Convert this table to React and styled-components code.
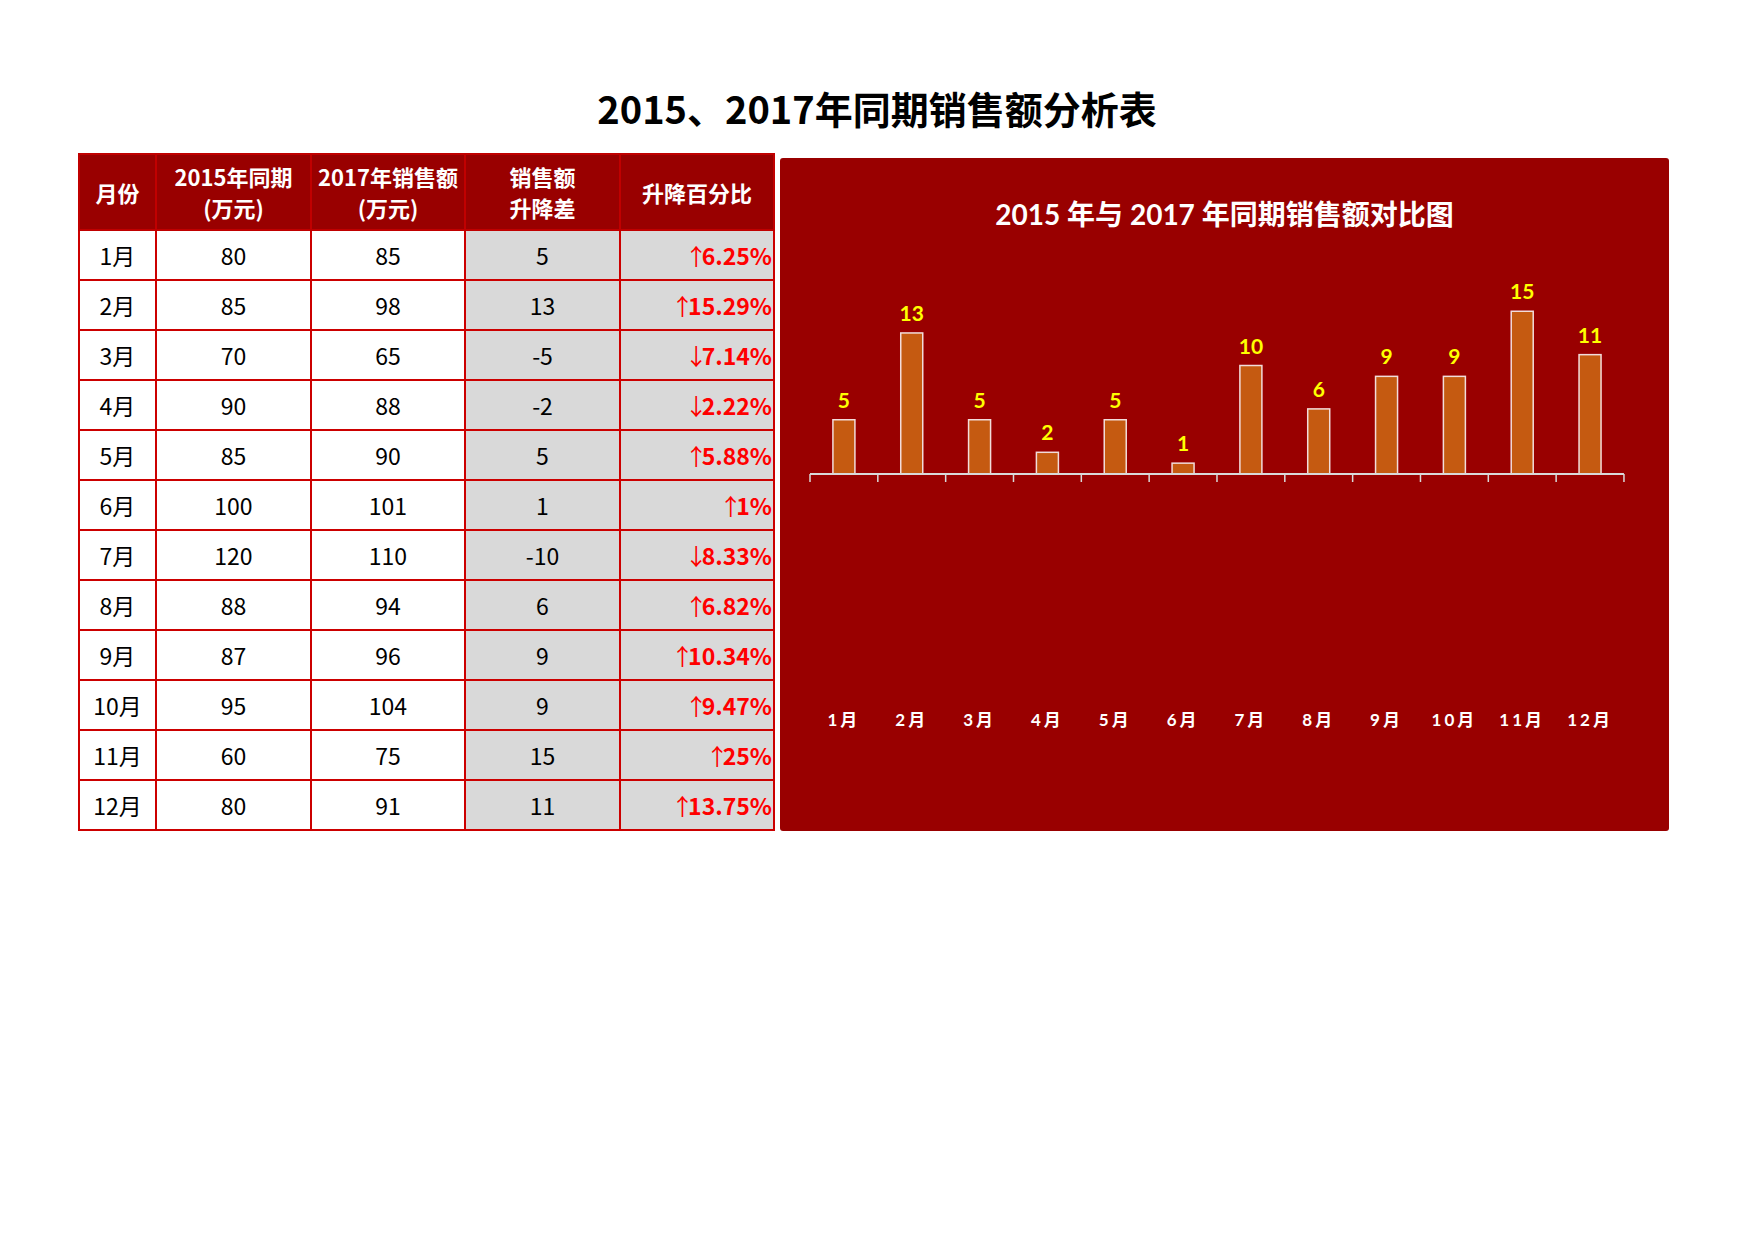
import React from 'react';
import styled, {createGlobalStyle} from 'styled-components';

const GlobalStyle = createGlobalStyle`
  body {
    margin: 0;
    background: #ffffff;
    font-family: "Noto Sans CJK SC", "Noto Sans", sans-serif;
  }
`;

const rows = [
  [80, 85], [85, 98], [70, 65], [90, 88], [85, 90], [100, 101],
  [120, 110], [88, 94], [87, 96], [95, 104], [60, 75], [80, 91],
].map(([a, b], i) => {
  const diff = b - a;
  const pct = parseFloat((Math.abs(diff) / a * 100).toFixed(2));
  return {month: `${i + 1}月`, a, b, diff, pct, up: diff >= 0};
});

const Page = styled.div`
  width: 1754px;
  min-height: 1240px;
`;

const Title = styled.h1`
  margin: 0;
  padding-top: 83px;
  height: 50px;
  line-height: 50px;
  text-align: center;
  font-size: 38px;
  font-weight: 700;
  color: #000;
`;

const Body = styled.div`
  display: flex;
  align-items: flex-end;
  gap: 5px;
  padding: 20px 0 0 78px;
`;

const Table = styled.table`
  border-collapse: collapse;
  table-layout: fixed;
  width: 694px;
  border: 2px solid #c00000;
`;

const HeadCell = styled.th`
  height: 74px;
  padding: 0;
  background: #990000;
  color: #fff;
  font-size: 22px;
  font-weight: 700;
  line-height: 31px;
  border: 2px solid #c00000;
  text-align: center;
  white-space: nowrap;
`;

const Cell = styled.td`
  height: 48px;
  padding: 0 ${p => (p.$right ? '1px' : '0')} 0 0;
  border: 2px solid #cc0000;
  background: ${p => (p.$gray ? '#d9d9d9' : '#fff')};
  color: ${p => (p.$red ? '#ff0000' : '#000')};
  font-size: 23px;
  font-weight: ${p => (p.$red ? 700 : 400)};
  text-align: ${p => (p.$right ? 'right' : 'center')};
  white-space: nowrap;
`;

const Arrow = styled.span`
  font-weight: 400;
  letter-spacing: -6px;
`;

const ChartPanel = styled.div`
  width: 889px;
  height: 673px;
  background: #990000;
  border-radius: 3px;
  display: flex;
  flex-direction: column;
`;

const ChartTitle = styled.div`
  padding-top: 40px;
  height: 32px;
  line-height: 32px;
  text-align: center;
  color: #fff;
  font-family: Lato, "Noto Sans CJK SC", sans-serif;
  font-size: 28px;
  font-weight: 700;
`;

const Chart = styled.svg`
  display: block;
  font-family: Lato, "Noto Sans CJK SC", sans-serif;
  font-weight: 700;
`;

function BarChart() {
  const axisY = 244;
  const x0 = 30;
  const step = 67.83;
  const unit = 10.85;
  const barW = 22;
  return (
    <Chart width="889" height="601" viewBox="0 0 889 601">
      {rows.map((r, i) => {
        const v = Math.abs(r.diff);
        const h = v * unit;
        const cx = x0 + step * i + step / 2;
        return (
          <g key={r.month}>
            <rect x={cx - barW / 2} y={axisY - h} width={barW} height={h}
              fill="#c55a11" stroke="#f2dcdb" strokeWidth="1.5" />
            <text x={cx} y={axisY - h - 12} textAnchor="middle" fill="#ffff00" fontSize="21">{v}</text>
            <text x={cx} y={496} textAnchor="middle" fill="#fff" fontSize="17" letterSpacing="3">{r.month}</text>
          </g>
        );
      })}
      <line x1={x0} y1={axisY} x2={x0 + step * 12} y2={axisY} stroke="#d9d9d9" strokeWidth="2" />
      {Array.from({length: 13}).map((_, i) => (
        <line key={i} x1={x0 + step * i} y1={axisY} x2={x0 + step * i} y2={axisY + 8}
          stroke="#d9d9d9" strokeWidth="1.5" />
      ))}
    </Chart>
  );
}

export default function App() {
  return (
    <Page>
      <GlobalStyle />
      <Title>2015、2017年同期销售额分析表</Title>
      <Body>
        <Table>
          <colgroup>
            <col style={{width: 77}} />
            <col style={{width: 155}} />
            <col style={{width: 154}} />
            <col style={{width: 155}} />
            <col style={{width: 154}} />
          </colgroup>
          <thead>
            <tr>
              <HeadCell>月份</HeadCell>
              <HeadCell>2015年同期<br />(万元)</HeadCell>
              <HeadCell>2017年销售额<br />(万元)</HeadCell>
              <HeadCell>销售额<br />升降差</HeadCell>
              <HeadCell>升降百分比</HeadCell>
            </tr>
          </thead>
          <tbody>
            {rows.map(r => (
              <tr key={r.month}>
                <Cell>{r.month}</Cell>
                <Cell>{r.a}</Cell>
                <Cell>{r.b}</Cell>
                <Cell $gray>{r.diff}</Cell>
                <Cell $gray $red $right><Arrow>{r.up ? '↑' : '↓'}</Arrow>{r.pct}%</Cell>
              </tr>
            ))}
          </tbody>
        </Table>
        <ChartPanel>
          <ChartTitle>2015 年与 2017 年同期销售额对比图</ChartTitle>
          <BarChart />
        </ChartPanel>
      </Body>
    </Page>
  );
}
